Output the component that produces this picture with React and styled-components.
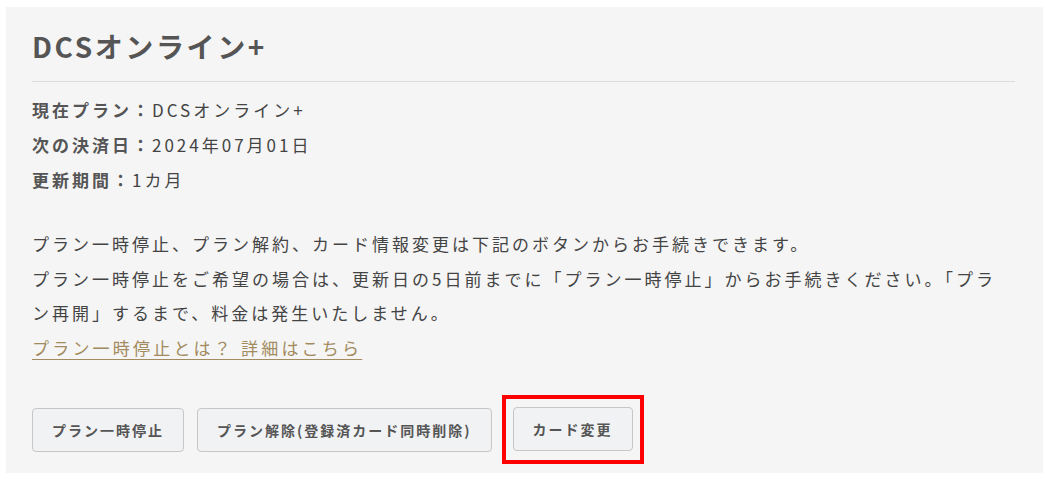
import React from "react";
import styled, { createGlobalStyle } from "styled-components";

const Global = createGlobalStyle`
  html, body { margin: 0; padding: 0; background: #ffffff; }
  body { font-family: "Noto Sans CJK JP", "Noto Sans", sans-serif; color: #444; }
`;

const Panel = styled.section`
  margin: 7px 2px 7px 6px;
  background: #f5f5f5;
  padding: 20px 28px 9px 26px;
`;

const Title = styled.h1`
  margin: 0;
  padding-bottom: 15px;
  border-bottom: 1px solid #dcdcdc;
  font-size: 28px;
  line-height: 39px;
  font-weight: 700;
  color: #555;
  letter-spacing: 2.6px;
`;

const InfoList = styled.dl`
  margin: 10px 0 0;
`;

const InfoRow = styled.div`
  display: flex;
  font-size: 17px;
  line-height: 35px;
  letter-spacing: 3px;
  color: #444;
`;

const Label = styled.dt`
  font-weight: 700;
  color: #555;
`;

const Value = styled.dd`
  margin: 0;
`;

const Text = styled.p`
  margin: 30px 0 0;
  font-size: 17px;
  line-height: 34.5px;
  letter-spacing: 3px;
  color: #444;
`;

const Link = styled.a`
  color: #a28b5e;
  text-decoration: underline;
  text-underline-offset: 4px;
  letter-spacing: 3.2px;
`;

const ButtonRow = styled.div`
  display: flex;
  align-items: center;
  gap: 13px;
  margin-top: 30px;
`;

const Button = styled.button`
  height: 44px;
  padding: 0 19px;
  background: #f1f2f4;
  border: 1px solid #c6c6c6;
  border-radius: 4px;
  font-family: "Noto Sans CJK JP", "Noto Sans", sans-serif;
  font-size: 14px;
  font-weight: 700;
  letter-spacing: 2px;
  color: #555;
  cursor: pointer;
`;

const Highlight = styled.div`
  margin-left: -3px;
  border: 4px solid #ff0000;
  padding: 8px 7px 9px 7px;
  display: flex;
`;

export default function App() {
  return (
    <>
      <Global />
      <Panel>
        <Title>DCSオンライン+</Title>
        <InfoList>
          <InfoRow>
            <Label>現在プラン：</Label>
            <Value>DCSオンライン+</Value>
          </InfoRow>
          <InfoRow>
            <Label>次の決済日：</Label>
            <Value>2024年07月01日</Value>
          </InfoRow>
          <InfoRow>
            <Label>更新期間：</Label>
            <Value>1カ月</Value>
          </InfoRow>
        </InfoList>
        <Text>
          プラン一時停止、プラン解約、カード情報変更は下記のボタンからお手続きできます。
          <br />
          プラン一時停止をご希望の場合は、更新日の5日前までに「プラン一時停止」からお手続きください。「プラン再開」するまで、料金は発生いたしません。
          <br />
          <Link href="#">プラン一時停止とは？ 詳細はこちら</Link>
        </Text>
        <ButtonRow>
          <Button>プラン一時停止</Button>
          <Button>プラン解除(登録済カード同時削除)</Button>
          <Highlight>
            <Button>カード変更</Button>
          </Highlight>
        </ButtonRow>
      </Panel>
    </>
  );
}
